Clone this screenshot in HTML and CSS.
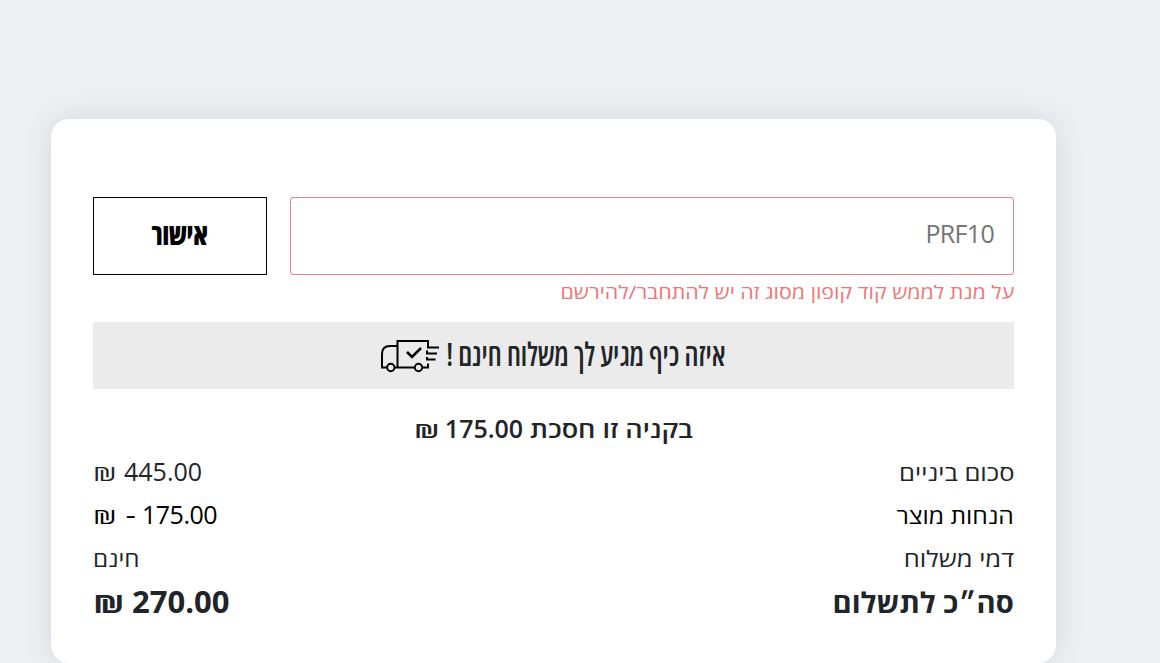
FILE: index.html
```html
<!DOCTYPE html>
<html lang="he" dir="rtl">
<head>
  <meta charset="utf-8"/>
  <title>סיכום הזמנה</title>
  <link rel="stylesheet" href="styles.css">
</head>
<body>
  <div class="summary-card">
    <form class="coupon-form">
      <input class="coupon-input" type="text" placeholder="PRF10">
      <button class="coupon-button" type="button"><span>אישור</span></button>
    </form>
    <div class="coupon-error"><span>על מנת לממש קוד קופון מסוג זה יש להתחבר/להירשם</span></div>

    <div class="shipping-banner">
      <span class="shipping-text">איזה כיף מגיע לך משלוח חינם !</span>
      <svg class="truck" width="60" height="34" viewBox="0 0 60 34" fill="none" stroke="#000" stroke-width="2">
        <path d="M6.500 28.500H2V15Q2 7 10 7H17"/>
        <path d="M14.500 28.500H34.500"/>
        <path d="M17.500 28V2H48V8.500H59"/>
        <path d="M47 14.500H57M47 11.500V15.500M47 20.500H55.500M47 18V21.500M42.500 28.500H48V24.500"/>
        <path d="M27 13L32 18L41 9" stroke-width="2.600"/>
        <circle cx="10.800" cy="28.500" r="3.700"/>
        <circle cx="38.500" cy="28.500" r="3.700"/>
      </svg>
    </div>

    <div class="saving"><span>בקניה זו חסכת</span><span dir="ltr"><span class="shekel">₪</span>175.00</span></div>

    <div class="row">
      <span class="label">סכום ביניים</span>
      <span class="value" dir="ltr"><span class="shekel">₪</span>445.00</span>
    </div>
    <div class="row discount">
      <span class="label">הנחות מוצר</span>
      <span class="value" dir="ltr"><span class="shekel">₪</span><span class="minus">-</span> 175.00</span>
    </div>
    <div class="row">
      <span class="label">דמי משלוח</span>
      <span class="value free">חינם</span>
    </div>
    <div class="row total">
      <span class="label">סה״כ לתשלום</span>
      <span class="value" dir="ltr"><span class="shekel">₪</span>270.00</span>
    </div>
  </div>
</body>
</html>
```
FILE: styles.css
```css
* { box-sizing: border-box; }
body {
  margin: 0;
  height: 663px;
  overflow: hidden;
  padding: 119px 104px 0 51px;
  background: #eeeff3;
  color: #212529;
  font-family: "Open Sans", "Noto Sans", sans-serif;
}
.summary-card {
  height: 544px;
  padding: 78px 42px 0;
  background: #fff;
  border-radius: 18px;
  box-shadow: 0 0 30px rgba(0, 0, 0, 0.1);
}
.coupon-form {
  display: flex;
  gap: 23px;
  height: 78px;
}
.coupon-input {
  flex: 1;
  min-width: 0;
  padding: 0 19px 6px;
  border: 1px solid #ee8088;
  border-radius: 3px;
  background: #fff;
  font-family: inherit;
  font-size: 25px;
  letter-spacing: -0.7px;
}
.coupon-input::placeholder { color: #757575; }
.coupon-button {
  width: 174px;
  padding: 0 0 6px;
  border: 1px solid #000;
  background: #fff;
  color: #000;
  font-family: inherit;
  font-size: 30px;
  font-weight: 800;
  font-stretch: 75%;
}
.coupon-button span {
  display: inline-block;
  transform: scaleX(0.86);
}
.coupon-error {
  height: 47px;
  line-height: 35px;
  color: #f07575;
  font-size: 18px;
}
.coupon-error span {
  display: inline-block;
  transform: scaleX(1.187);
  transform-origin: right;
}
.shipping-banner {
  display: flex;
  align-items: center;
  justify-content: center;
  gap: 7px;
  height: 67px;
  padding-right: 3px;
  background: #ebebeb;
}
.shipping-text {
  width: 278px;
  padding-bottom: 4px;
  font-size: 32px;
  font-weight: 600;
  font-stretch: 75%;
  white-space: nowrap;
  transform: scaleX(0.891);
  transform-origin: right;
}
.saving {
  display: flex;
  justify-content: center;
  gap: 7px;
  margin-top: 18px;
  height: 43px;
  line-height: 43px;
  font-size: 25px;
  font-weight: 600;
}
.saving > span:first-child {
  width: 163px;
  padding-top: 1px;
  font-size: 23px;
  white-space: nowrap;
  transform: scaleX(1.175);
  transform-origin: right;
}
.shekel {
  display: inline-block;
  width: 31px;
  font-size: 0.82em;
  line-height: 1;
  transform: scaleX(1.46);
  transform-origin: left;
}
.row {
  display: flex;
  justify-content: space-between;
  height: 43px;
  line-height: 43px;
  font-size: 25px;
}
.label {
  font-size: 22px;
  transform: scaleX(1.16);
  transform-origin: right;
}
.free {
  font-size: 22px;
  transform: scaleX(1.1);
  transform-origin: left;
}
.label, .free { padding-top: 1px; }
.discount { color: #000; }
.discount .label { transform: scaleX(1.12); }
.discount .value {
  letter-spacing: -0.5px;
  word-spacing: -1px;
}
.minus {
  display: inline-block;
  width: 13px;
  text-align: center;
  transform: scaleX(1.3);
}
.total {
  height: 45px;
  line-height: 45px;
  font-size: 31px;
  font-weight: 700;
}
.total .label {
  font-size: 28px;
  transform: scaleX(1.043);
}
.total .shekel {
  width: 39px;
  transform: scaleX(1.35);
}
```
